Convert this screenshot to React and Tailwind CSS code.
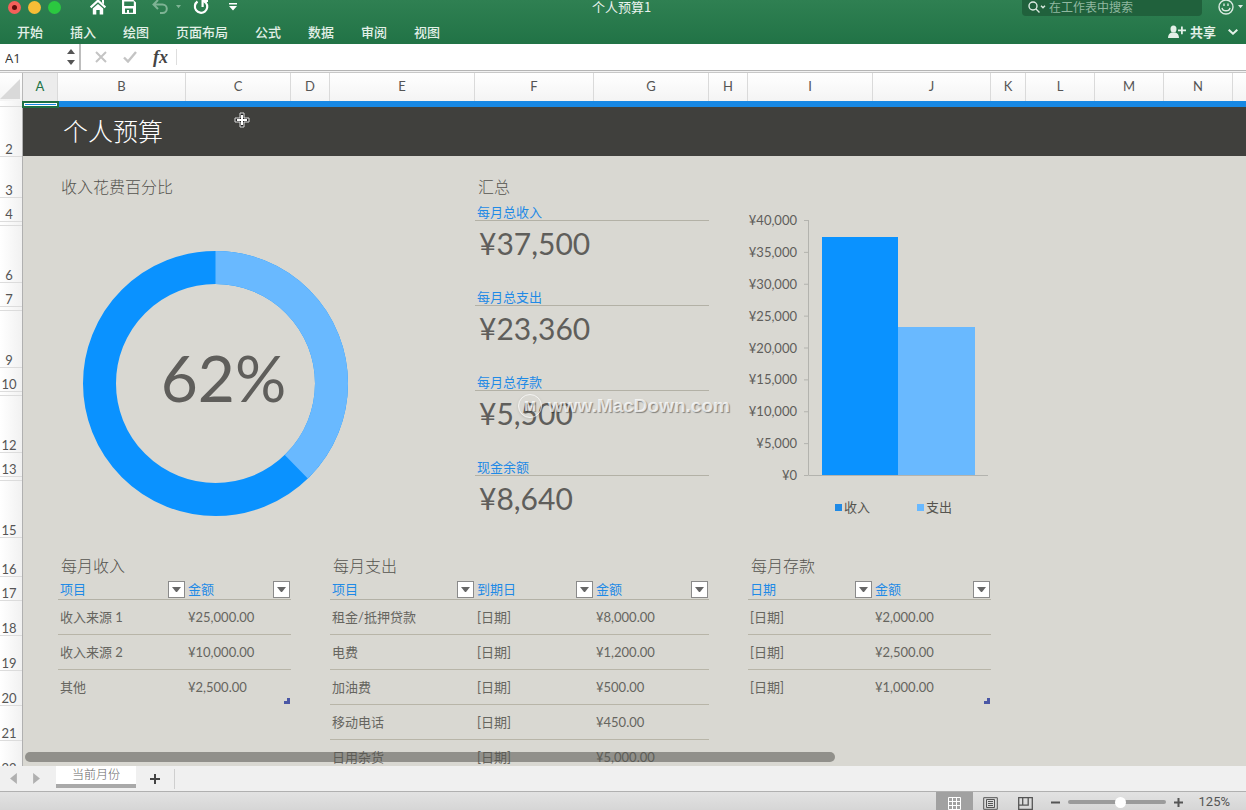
import React, { useState } from 'react';

// Column letters and widths of the sheet
const columns = [
  { name: 'A', width: 35 },
  { name: 'B', width: 128 },
  { name: 'C', width: 105 },
  { name: 'D', width: 39 },
  { name: 'E', width: 145 },
  { name: 'F', width: 119 },
  { name: 'G', width: 115 },
  { name: 'H', width: 39 },
  { name: 'I', width: 125 },
  { name: 'J', width: 118 },
  { name: 'K', width: 35 },
  { name: 'L', width: 69 },
  { name: 'M', width: 69 },
  { name: 'N', width: 69 },
];

// Row heights, the narrow spacer rows have no visible number
const rows = [
  { name: '', height: 6 },
  { name: '2', height: 50 },
  { name: '3', height: 41 },
  { name: '4', height: 24 },
  { name: '', height: 4 },
  { name: '6', height: 57 },
  { name: '7', height: 24 },
  { name: '', height: 4 },
  { name: '9', height: 57 },
  { name: '10', height: 24 },
  { name: '', height: 4 },
  { name: '12', height: 57 },
  { name: '13', height: 24 },
  { name: '', height: 4 },
  { name: '15', height: 57 },
  { name: '16', height: 39 },
  { name: '17', height: 24 },
  { name: '18', height: 35 },
  { name: '19', height: 35 },
  { name: '20', height: 35 },
  { name: '21', height: 35 },
  { name: '22', height: 35 },
];

const menus = ['开始', '插入', '绘图', '页面布局', '公式', '数据', '审阅', '视图'];

const summary = [
  { label: '每月总收入', value: '¥37,500' },
  { label: '每月总支出', value: '¥23,360' },
  { label: '每月总存款', value: '¥5,500' },
  { label: '现金余额', value: '¥8,640' },
];

const income = [
  ['收入来源 1', '¥25,000.00'],
  ['收入来源 2', '¥10,000.00'],
  ['其他', '¥2,500.00'],
];

const expenses = [
  ['租金/抵押贷款', '[日期]', '¥8,000.00'],
  ['电费', '[日期]', '¥1,200.00'],
  ['加油费', '[日期]', '¥500.00'],
  ['移动电话', '[日期]', '¥450.00'],
  ['日用杂货', '[日期]', '¥5,000.00'],
];

const savings = [
  ['[日期]', '¥2,000.00'],
  ['[日期]', '¥2,500.00'],
  ['[日期]', '¥1,000.00'],
];

const Triangle = ({ className }) => (
  <svg viewBox="0 0 8 5" className={className} fill="currentColor">
    <path d="M0 0h8L4 5z" />
  </svg>
);

const TitleBar = () => (
  <div className="flex h-[14px] items-center">
    <div className="flex flex-1 items-center">
      <div className="flex gap-[7px] pl-2">
        <button aria-label="关闭" className="flex size-[13px] items-center justify-center rounded-full bg-[#f4605a]">
          <span className="size-[5px] rounded-full bg-[#5d0d0b]" />
        </button>
        <button aria-label="最小化" className="size-[13px] rounded-full bg-[#f7bd36]" />
        <button aria-label="缩放" className="size-[13px] rounded-full bg-[#2bc840]" />
      </div>
      <div className="flex items-center pl-[29px] text-white">
        <button aria-label="主页" className="mr-[15px]">
          <svg viewBox="0 0 16 16" className="size-4">
            <path d="M.6 8.400 8 1.600l7.400 6.800" fill="none" stroke="currentColor" strokeWidth="2.200" />
            <path d="M12 1h2v4.500l-2-2zM2.800 9.500 8 4.900l5.200 4.600v6H9.700V11H6.300v4.500H2.800z" fill="currentColor" />
          </svg>
        </button>
        <button aria-label="保存" className="mr-[15px]">
          <svg viewBox="0 0 16 16" className="size-4">
            <path
              d="M1 1h11.500L15 3.500V15H1zM3.200 2.500v4.500h9.600V2.500zM4 9.500v4.200h2V11h2v2.700h4V9.500z"
              fill="currentColor"
              fillRule="evenodd"
            />
          </svg>
        </button>
        <button aria-label="撤消" className="mr-2 text-[#7eb394]">
          <svg viewBox="0 0 16 16" className="size-4" fill="none" stroke="currentColor" strokeWidth="2">
            <path d="M6 1 1.500 5.500 6 10M2 5.500h8.500a4.300 4.300 0 0 1 0 8.600H8" />
          </svg>
        </button>
        <Triangle className="mr-3 w-[5px] text-[#7eb394]" />
        <button aria-label="恢复" className="mr-5">
          <svg viewBox="0 0 16 16" className="size-4" fill="none" stroke="currentColor" strokeWidth="2.200">
            <path d="M4.500 2.500A6.200 6.200 0 1 0 13 3.800L11 2.300" />
            <path d="M9.600 8V2H15" />
          </svg>
        </button>
        <button aria-label="自定义工具栏">
          <svg viewBox="0 0 8 8" className="size-2" fill="currentColor">
            <path d="M0 0h8v1.500H0zM0 3h8L4 7.500z" />
          </svg>
        </button>
      </div>
    </div>
    <h1 className="text-[13px] leading-[14px] text-[#e9f3ed]">个人预算1</h1>
    <div className="flex flex-1 items-center justify-end pr-[3px] text-[#dcebe2]">
      <label className="flex h-[17px] w-[180px] items-center self-start rounded-b bg-[#20613c] pl-1.5">
        <svg viewBox="0 0 18 12" className="h-3 w-[18px]" fill="none" stroke="currentColor" strokeWidth="1.400">
          <circle cx="5" cy="5" r="4" />
          <path d="m8 8 3.500 3.500M13 4.800l2 2 2-2" />
        </svg>
        <input
          aria-label="搜索"
          placeholder="在工作表中搜索"
          className="ml-[3px] w-36 text-xs leading-4 outline-none placeholder:text-[#90b8a0]"
        />
      </label>
      <button aria-label="反馈" className="ml-4">
        <svg viewBox="0 0 16 16" className="size-4" fill="none" stroke="currentColor" strokeWidth="1.400">
          <circle cx="8" cy="8" r="7" />
          <path d="M4 8.800c.6 4 7.400 4 8 0M6 4.500v2.600M10 4.500v2.600" />
        </svg>
      </button>
      <Triangle className="ml-1 w-[5px]" />
    </div>
  </div>
);

const MenuBar = () => (
  <nav className="mt-1.5 flex h-6 items-center justify-between pr-2 pl-[17px] text-[13px] leading-5 font-medium text-[#e3f0e8]">
    <div className="flex gap-[27px]">
      {menus.map((menu) => (
        <button key={menu}>{menu}</button>
      ))}
    </div>
    <div className="flex items-center">
      <button className="flex items-center gap-1 font-bold">
        <svg viewBox="0 0 18 14" className="h-[14px] w-[18px]" fill="currentColor">
          <ellipse cx="5.500" cy="4" rx="3" ry="3.500" />
          <path d="M0 13c0-3 1.500-5 3.500-5.500h4C9.500 8 11 10 11 13zM13 1.500h1.800v3H18v1.800h-3.200v3H13v-3h-3V4.500h3z" />
        </svg>
        共享
      </button>
      <button aria-label="折叠功能区" className="ml-3">
        <svg viewBox="0 0 10 6" className="w-2.5" fill="none" stroke="currentColor" strokeWidth="2">
          <path d="m.7.7 4.300 4 4.300-4" />
        </svg>
      </button>
    </div>
  </nav>
);

const FormulaBar = () => (
  <div className="flex h-[27px] items-center border-b border-[#b5b5b5] bg-white">
    <input
      aria-label="名称框"
      defaultValue="A1"
      className="w-[67px] pt-0.5 pl-[5px] font-['Open_Sans',sans-serif] text-[13px] leading-4 text-[#333] outline-none"
    />
    <div className="flex w-3 flex-col gap-1.5 text-[#555]">
      <Triangle className="w-2 rotate-180" />
      <Triangle className="w-2" />
    </div>
    <div className="flex h-full items-center gap-4 border-l-2 border-[#bdbdbd] pl-3.5">
      <button aria-label="取消">
        <svg viewBox="0 0 12 12" className="size-3" stroke="#c4c4c4" strokeWidth="2">
          <path d="m1 1 10 10M11 1 1 11" />
        </svg>
      </button>
      <button aria-label="输入">
        <svg viewBox="0 0 14 12" className="h-3 w-3.5" fill="none" stroke="#c4c4c4" strokeWidth="2.400">
          <path d="m1 6.500 4 4L13 1" />
        </svg>
      </button>
      <button className="font-['Liberation_Serif',serif] text-lg leading-5 font-bold text-[#444] italic">fx</button>
    </div>
    <input
      aria-label="编辑栏"
      className="ml-2 h-4 min-w-0 flex-1 border-l border-[#dedede] px-2 text-sm outline-none"
    />
  </div>
);

const ColumnHeaders = () => (
  <div className="flex h-[29px] shrink-0 border-t border-[#c8c8c8] bg-linear-to-b from-white to-[#f4f4f4] text-[13px] text-[#555]">
    <div className="flex w-[23px] shrink-0 items-end border-r border-[#b8b8b8]">
      <svg viewBox="0 0 22 24" className="h-6 w-[22px]">
        <path d="M0 22 20 2v20z" fill="#d9d9d9" />
      </svg>
    </div>
    {columns.map((column) => (
      <div
        key={column.name}
        style={{ width: column.width }}
        className={`flex shrink-0 items-center justify-center border-r border-[#dadada] ${
          column.name === 'A' ? 'bg-[#ececec] text-[#217346]' : ''
        }`}
      >
        {column.name}
      </div>
    ))}
  </div>
);

const RowHeaders = () => (
  <div className="w-[23px] shrink-0 border-r border-[#b0b0b0] bg-linear-to-r from-white to-[#f1f1f1] text-[13px] leading-[14px] text-[#555]">
    {rows.map((row, i) => (
      <div
        key={i}
        style={{ height: row.height }}
        className="flex items-end justify-center border-b border-[#dcdcdc] pr-1"
      >
        {row.name}
      </div>
    ))}
  </div>
);

const SectionTitle = ({ children }) => (
  <h3 className="text-base leading-5 font-light text-[#55544f]">{children}</h3>
);

const Donut = () => {
  const length = 2 * Math.PI * 116;
  return (
    <section className="w-[417px] shrink-0">
      <div className="flex h-[41px] items-end pl-[3px]">
        <SectionTitle>收入花费百分比</SectionTitle>
      </div>
      <div className="relative mt-[54px] ml-[25px] size-[265px]">
        <svg viewBox="0 0 265 265" className="size-full -rotate-90" fill="none" strokeWidth="33">
          <circle cx="132.500" cy="132.500" r="116" stroke="#0a92ff" />
          <circle cx="132.500" cy="132.500" r="116" stroke="#69b9ff" strokeDasharray={`${length * 0.377} ${length}`} />
        </svg>
        <div className="absolute inset-0 flex items-center justify-center pb-3 pl-4 text-[64px] leading-none text-[#5f5e5b]">
          62%
        </div>
      </div>
    </section>
  );
};

const Summary = () => (
  <section className="relative w-[234px] shrink-0">
    <div className="flex h-[41px] items-end pl-[3px]">
      <SectionTitle>汇总</SectionTitle>
    </div>
    <dl>
      {summary.map((item) => (
        <div key={item.label} className="h-[85px]">
          <dt className="flex h-6 items-end border-b border-[#b3b1a6] pl-0.5 text-[13px] leading-4 text-[#1f8ae6]">
            {item.label}
          </dt>
          <dd className="pt-1 pl-1 text-[30px] leading-9 text-[#5f5e5b]">{item.value}</dd>
        </div>
      ))}
    </dl>
    <div className="absolute top-[238px] left-[43px] flex items-center gap-1.5 font-['Liberation_Sans',sans-serif] text-[19px] leading-6 font-bold text-white/75 [text-shadow:1px_1px_1px_rgba(0,0,0,0.4)]">
      <span className="flex size-6 items-center justify-center rounded-full border border-white/70 text-sm shadow">M</span>
      www.MacDown.com
    </div>
  </section>
);

const BarChart = () => {
  const ticks = [40000, 35000, 30000, 25000, 20000, 15000, 10000, 5000, 0];
  return (
    <svg viewBox="0 0 242 381" className="ml-[39px] h-[381px] w-[242px] shrink-0" fontSize="13">
      {ticks.map((tick, i) => (
        <g key={tick}>
          <text x="49" y={69 + i * 31.875} textAnchor="end" fill="#5f5e5b">
            ¥{tick.toLocaleString('en-US')}
          </text>
          <path d={`M56 ${64.5 + i * 31.875}h4`} stroke="#b3b3ae" />
        </g>
      ))}
      <rect x="74" y="81" width="76" height="238" fill="#0a92ff" />
      <rect x="150" y="171" width="77" height="148" fill="#69b9ff" />
      <path d="M60.500 64v255.500H240" fill="none" stroke="#b3b3ae" />
      <rect x="87" y="348" width="7" height="7" fill="#1f8ae6" />
      <text x="96" y="356" fill="#55544f">收入</text>
      <rect x="169" y="348" width="7" height="7" fill="#69b9ff" />
      <text x="178" y="356" fill="#55544f">支出</text>
    </svg>
  );
};

const DataTable = ({ title, headers, widths, data, corner }) => (
  <section className="relative shrink-0">
    <div className="flex h-[39px] items-end pl-[3px]">
      <SectionTitle>{title}</SectionTitle>
    </div>
    <table className="table-fixed border-separate border-spacing-0 text-[13px] leading-4 text-[#66655f]">
      <colgroup>
        {widths.map((width, i) => (
          <col key={i} style={{ width }} />
        ))}
      </colgroup>
      <thead>
        <tr>
          {headers.map((header) => (
            <th
              key={header}
              className="h-6 border-b border-[#b3b1a6] p-0 pb-px pl-0.5 text-left align-bottom font-normal text-[#1f8ae6]"
            >
              <div className="flex items-start justify-between pr-px">
                {header}
                <button
                  aria-label={`筛选${header}`}
                  className="flex size-[17px] items-center justify-center border border-[#8a8a8a] bg-white text-[#666]"
                >
                  <Triangle className="w-[9px]" />
                </button>
              </div>
            </th>
          ))}
        </tr>
      </thead>
      <tbody>
        {data.map((cells, i) => (
          <tr key={i}>
            {cells.map((cell, j) => (
              <td
                key={j}
                className={`h-[35px] border-b p-0 pl-0.5 ${
                  i === data.length - 1 ? 'border-transparent' : 'border-[#b8b5a8]'
                }`}
              >
                {cell}
              </td>
            ))}
          </tr>
        ))}
      </tbody>
    </table>
    {/* Resize handle of the table */}
    {corner && (
      <svg viewBox="0 0 6 6" className="absolute top-[161px] right-px size-1.5" fill="#4a57a5">
        <path d="M3 0h3v6H0V3h3z" />
      </svg>
    )}
  </section>
);

const Sheet = () => (
  <main className="relative flex min-h-0 flex-1 overflow-hidden bg-[#d9d8d2]">
    <RowHeaders />
    <div className="min-w-0 flex-1">
      <div className="h-1.5 bg-[#1788e4]" />
      <div className="flex h-[49px] items-center bg-[#40403d] pl-10">
        <h2 className="text-[25px] font-light text-white">个人预算</h2>
      </div>
      <div className="flex h-[381px] pl-[35px]">
        <Donut />
        <Summary />
        <BarChart />
      </div>
      <div className="flex items-start gap-[39px] pl-[35px]">
        <DataTable title="每月收入" headers={['项目', '金额']} widths={[128, 105]} data={income} corner />
        <DataTable title="每月支出" headers={['项目', '到期日', '金额']} widths={[145, 119, 115]} data={expenses} />
        <DataTable title="每月存款" headers={['日期', '金额']} widths={[125, 118]} data={savings} corner />
      </div>
    </div>
    {/* Selected cell A1 */}
    <div className="absolute top-0 left-[22px] h-[7px] w-[37px] border-2 border-[#1d7044] bg-[#1788e4] outline -outline-offset-3 outline-white" />
    {/* Cell cursor */}
    <svg viewBox="0 0 16 16" className="absolute top-[11px] left-[234px] size-4">
      <path d="M6 1h4v5h5v4h-5v5H6v-5H1V6h5z" fill="#222" stroke="#ddd" />
      <path d="M8 3v10M3 8h10" stroke="white" strokeWidth="2" />
    </svg>
    <div className="absolute bottom-1 left-[25px] h-2.5 w-[65%] rounded-full bg-[#555550]/55" />
  </main>
);

const SheetTabs = () => (
  <div className="flex h-[26px] shrink-0 items-center border-b border-[#b0b0b0] bg-[#f0f0f0]">
    <button aria-label="上一个工作表" className="ml-2">
      <Triangle className="w-[11px] rotate-90 text-[#b0b0b0]" />
    </button>
    <button aria-label="下一个工作表" className="ml-3">
      <Triangle className="w-[11px] -rotate-90 text-[#b0b0b0]" />
    </button>
    <button className="ml-3.5 h-[22px] w-20 self-start border-b-4 border-[#a9a9a9] bg-white text-xs font-light text-[#666]">
      当前月份
    </button>
    <button aria-label="新建工作表" className="flex h-5 w-[39px] items-center justify-center border-r border-[#cfcfcf]">
      <svg viewBox="0 0 10 10" className="size-2.5" stroke="#444" strokeWidth="2">
        <path d="M5 0v10M0 5h10" />
      </svg>
    </button>
  </div>
);

const StatusBar = () => {
  const [zoom, setZoom] = useState(125);
  return (
    <footer className="flex h-[18px] shrink-0 items-center justify-end overflow-hidden bg-linear-to-b from-[#e2e2e2] to-[#d6d6d6] pr-4 text-[#555]">
      <button aria-label="普通视图" className="flex h-full w-[37px] items-end justify-center bg-[#a1a1a1]">
        <svg viewBox="0 0 13 13" className="size-[13px]" fill="none" stroke="white">
          <path d="M.5.5h12v12H.5zM4.500 0v13M8.500 0v13M0 4.500h13M0 8.500h13" />
        </svg>
      </button>
      <button aria-label="页面布局" className="ml-2.5 self-end">
        <svg viewBox="0 0 15 13" className="h-[13px] w-[15px]" fill="none" stroke="currentColor">
          <path d="M.7.7h13.600v11.600H.7zM3.500 2.500h8v8h-8zM5 4.500h5M5 6.500h5M5 8.500h5" />
        </svg>
      </button>
      <button aria-label="分页预览" className="ml-5 self-end">
        <svg viewBox="0 0 15 13" className="h-[13px] w-[15px]" fill="none" stroke="currentColor" strokeWidth="1.300">
          <path d="M.7.7h13.600v11.600H.7zM4.700.7v7.500h5.500V.7M.7 8.200h4" />
        </svg>
      </button>
      <div className="ml-[18px] flex items-center gap-2 pt-0.5">
        <svg viewBox="0 0 9 9" className="size-[9px]" stroke="currentColor" strokeWidth="2">
          <path d="M0 4.500h9" />
        </svg>
        <input
          type="range"
          aria-label="缩放"
          min="10"
          max="223"
          value={zoom}
          onChange={(e) => setZoom(Number(e.target.value))}
          className="h-1 w-[98px] appearance-none rounded-full bg-[#9b9b9b] [&::-webkit-slider-thumb]:size-[11px] [&::-webkit-slider-thumb]:appearance-none [&::-webkit-slider-thumb]:rounded-full [&::-webkit-slider-thumb]:bg-white"
        />
        <svg viewBox="0 0 9 9" className="size-[9px]" stroke="currentColor" strokeWidth="2">
          <path d="M0 4.500h9M4.500 0v9" />
        </svg>
        <span className="ml-2 font-['Roboto',sans-serif] text-[13px] leading-4">{zoom}%</span>
      </div>
    </footer>
  );
};

export default function App() {
  return (
    <div className="flex h-screen flex-col overflow-hidden font-['Lato','Noto_Sans_CJK_SC',sans-serif]">
      <header className="shrink-0 bg-linear-to-b from-[#2f8052] to-[#217346] font-['Noto_Sans_CJK_SC',sans-serif]">
        <TitleBar />
        <MenuBar />
      </header>
      <FormulaBar />
      <div className="h-px shrink-0 bg-[#f2f2f2]" />
      <ColumnHeaders />
      <Sheet />
      <SheetTabs />
      <StatusBar />
    </div>
  );
}
